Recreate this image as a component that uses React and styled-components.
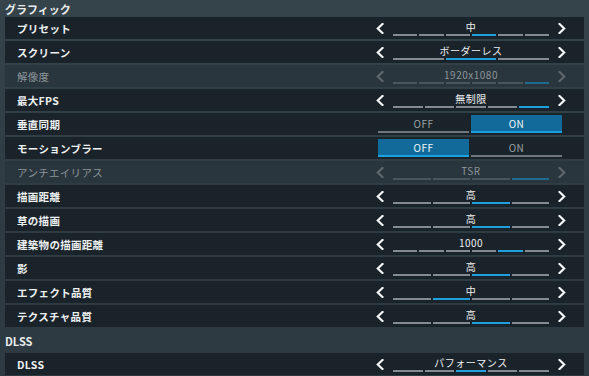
import React from "react";
import styled, { createGlobalStyle } from "styled-components";

const Global = createGlobalStyle`
  html, body { margin: 0; padding: 0; }
  body {
    width: 589px; height: 376px; overflow: hidden;
    background: linear-gradient(180deg, #35434a 0%, #2f3c43 50%, #2d3a41 100%);
    font-family: "Noto Sans CJK JP", "Noto Sans", sans-serif;
  }
`;

const Page = styled.div`
  display: flex;
  flex-direction: column;
  padding: 0 5px;
`;

const SectionTitle = styled.div`
  color: #e8eced;
  font-size: 11px;
  font-weight: 700;
  height: ${(p) => p.$h}px;
  display: flex;
  align-items: center;
  padding-top: ${(p) => p.$pt || 0}px;
  box-sizing: border-box;
`;

const List = styled.div`
  display: flex;
  flex-direction: column;
  gap: 2px;
`;

const Row = styled.div`
  height: 22px;
  display: flex;
  align-items: center;
  background: ${(p) => (p.$disabled ? "#2a363d" : "#1b232a")};
  padding-left: 12px;
`;

const Label = styled.div`
  flex: 1;
  color: ${(p) => (p.$disabled ? "#8a9499" : "#eef1f2")};
  font-size: 10.5px;
  font-weight: ${(p) => (p.$disabled ? 400 : 700)};
  letter-spacing: 0.3px;
`;

const Selector = styled.div`
  width: 190px;
  margin-right: 18px;
  display: flex;
  align-items: center;
  justify-content: space-between;
`;

const Arrow = styled.svg`
  width: 8px;
  height: 11px;
  display: block;
`;

const Center = styled.div`
  width: 156px;
  height: 22px;
  display: flex;
  flex-direction: column;
  align-items: stretch;
`;

const Value = styled.div`
  height: 17px;
  line-height: 17px;
  padding-top: 1px;
  box-sizing: border-box;
  text-align: center;
  font-size: 10px;
  color: ${(p) => (p.$disabled ? "#8a9499" : "#eef1f2")};
  letter-spacing: 0.5px;
`;

const Segs = styled.div`
  display: flex;
  gap: 2px;
`;

const Seg = styled.div`
  flex: 1;
  height: 2px;
  background: ${(p) =>
    p.$active
      ? p.$disabled ? "#1d6a92" : "#1da0de"
      : p.$disabled ? "#4b565c" : "#848b90"};
`;

const Toggle = styled.div`
  width: 184px;
  margin-right: 22px;
  display: flex;
  gap: 2px;
`;

const ToggleBtn = styled.div`
  flex: 1;
  height: 18px;
  box-sizing: border-box;
  display: flex;
  align-items: center;
  justify-content: center;
  font-size: 10px;
  letter-spacing: 0.5px;
  color: ${(p) => (p.$active ? "#f3f6f7" : "#9aa2a6")};
  background: ${(p) => (p.$active ? "#116a99" : "transparent")};
  border-bottom: 2px solid ${(p) => (p.$active ? "#1da0de" : "#6f777c")};
`;

const Chevron = ({ dir, disabled }) => (
  <Arrow viewBox="0 0 8 11">
    <polyline
      points={dir === "left" ? "6.5,1 1.8,5.5 6.5,10" : "1.5,1 6.2,5.5 1.5,10"}
      fill="none"
      stroke={disabled ? "#5d676c" : "#f4f6f7"}
      strokeWidth="2.2"
      strokeLinecap="square"
    />
  </Arrow>
);

const SelectRow = ({ label, value, count, active, disabled }) => (
  <Row $disabled={disabled}>
    <Label $disabled={disabled}>{label}</Label>
    <Selector>
      <Chevron dir="left" disabled={disabled} />
      <Center>
        <Value $disabled={disabled}>{value}</Value>
        <Segs>
          {Array.from({ length: count }).map((_, i) => (
            <Seg key={i} $active={i === active} $disabled={disabled} />
          ))}
        </Segs>
      </Center>
      <Chevron dir="right" disabled={disabled} />
    </Selector>
  </Row>
);

const ToggleRow = ({ label, on }) => (
  <Row>
    <Label>{label}</Label>
    <Toggle>
      <ToggleBtn $active={!on}>OFF</ToggleBtn>
      <ToggleBtn $active={on}>ON</ToggleBtn>
    </Toggle>
  </Row>
);

const graphics = [
  { type: "sel", label: "プリセット", value: "中", count: 6, active: 3 },
  { type: "sel", label: "スクリーン", value: "ボーダーレス", count: 3, active: 1 },
  { type: "sel", label: "解像度", value: "1920x1080", count: 6, active: 5, disabled: true },
  { type: "sel", label: "最大FPS", value: "無制限", count: 5, active: 4 },
  { type: "tog", label: "垂直同期", on: true },
  { type: "tog", label: "モーションブラー", on: false },
  { type: "sel", label: "アンチエイリアス", value: "TSR", count: 4, active: 3, disabled: true },
  { type: "sel", label: "描画距離", value: "高", count: 4, active: 2 },
  { type: "sel", label: "草の描画", value: "高", count: 4, active: 2 },
  { type: "sel", label: "建築物の描画距離", value: "1000", count: 6, active: 4 },
  { type: "sel", label: "影", value: "高", count: 4, active: 2 },
  { type: "sel", label: "エフェクト品質", value: "中", count: 4, active: 1 },
  { type: "sel", label: "テクスチャ品質", value: "高", count: 4, active: 2 },
];

const renderItem = (it) =>
  it.type === "tog" ? (
    <ToggleRow key={it.label} label={it.label} on={it.on} />
  ) : (
    <SelectRow key={it.label} {...it} />
  );

export default function App() {
  return (
    <>
      <Global />
      <Page>
        <SectionTitle $h={17}>グラフィック</SectionTitle>
        <List>{graphics.map(renderItem)}</List>
        <SectionTitle $h={26} $pt={2}>DLSS</SectionTitle>
        <List>
          {renderItem({ type: "sel", label: "DLSS", value: "パフォーマンス", count: 5, active: 2 })}
        </List>
      </Page>
    </>
  );
}
